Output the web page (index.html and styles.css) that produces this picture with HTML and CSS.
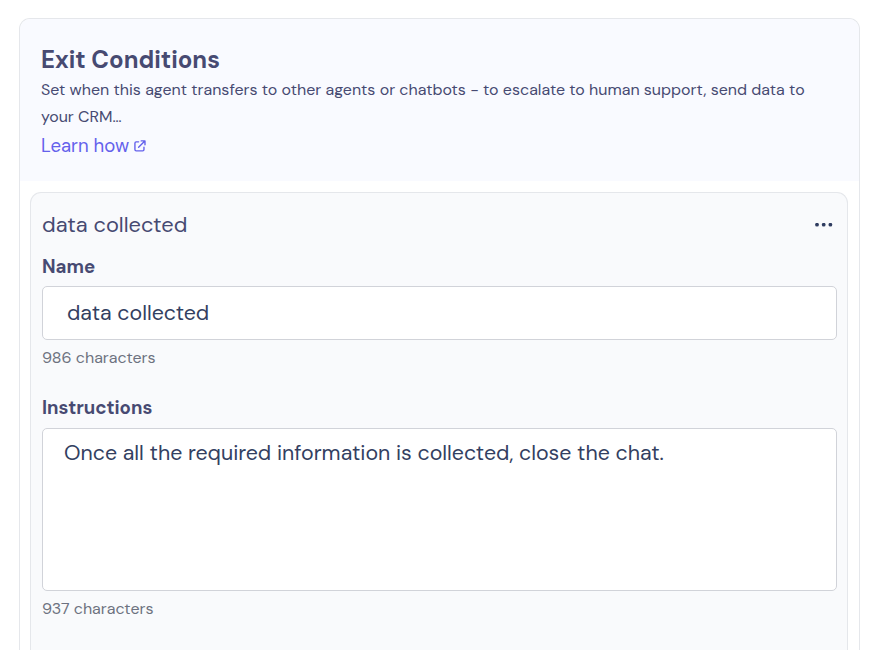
FILE: index.html
```html
<!DOCTYPE html>
<html lang="en">
<head>
<meta charset="utf-8">
<title>Exit Conditions</title>
<link rel="stylesheet" href="styles.css">
</head>
<body>
<main class="panel">
  <header class="intro">
    <h1>Exit Conditions</h1>
    <p>Set when this agent transfers to other agents or chatbots - to escalate to human support, send data to your CRM…</p>
    <a class="learn" href="#">Learn how
      <svg width="12" height="12" viewBox="0 0 13 13" fill="none" stroke="currentColor" stroke-width="1.5" stroke-linecap="round" stroke-linejoin="round"><path d="M5 2H2.4Q1 2 1 3.4V10.4Q1 11.8 2.4 11.8H9.4Q10.8 11.8 10.8 10.4V7.8M7.8 1H11.9V5.1M11.7 1.2L5 7.9"/></svg>
    </a>
  </header>
  <section class="card">
    <div class="card-head">
      <h2>data collected</h2>
      <button class="more" aria-label="More"><svg width="18" height="4" viewBox="0 0 18 4" fill="currentColor"><circle cx="2" cy="1.7" r="1.9"/><circle cx="8.7" cy="1.7" r="1.9"/><circle cx="15.4" cy="1.7" r="1.9"/></svg></button>
    </div>
    <label class="label" for="name">Name</label>
    <div class="field" id="name">data collected</div>
    <div class="count">986 characters</div>
    <label class="label second" for="instructions">Instructions</label>
    <div class="field area" id="instructions">Once all the required information is collected, close the chat.</div>
    <div class="count">937 characters</div>
  </section>
</main>
</body>
</html>
```
FILE: styles.css
```css
* { box-sizing: border-box; }
html, body { height: 100%; }
body {
  margin: 0;
  padding: 18px 20px 0 19px;
  background: #fff;
  color: #474a72;
  font-family: "DM Sans", Inter, sans-serif;
}
.panel {
  display: flex;
  flex-direction: column;
  height: 100%;
  border: 1px solid #e5e7eb;
  border-bottom: 0;
  border-radius: 11px 11px 0 0;
  overflow: hidden;
}
.intro {
  flex: none;
  height: 162px;
  padding: 25px 21px 0;
  background: #f9faff;
}
h1 { margin: 0; font-size: 24px; line-height: 32px; font-weight: 700; }
p { margin: 0; font-size: 16px; line-height: 27px; }
.learn {
  display: flex;
  align-items: center;
  gap: 5px;
  margin-top: 2px;
  color: #6461ec;
  font-size: 18.6px;
  line-height: 28px;
  text-decoration: none;
}
.card {
  flex: 1;
  margin: 11px 11px 0 10px;
  padding: 16px 10px 0 11px;
  background: #f9fafc;
  border: 1px solid #e5e7eb;
  border-bottom: 0;
  border-radius: 11px 11px 0 0;
}
.card-head { display: flex; justify-content: space-between; align-items: center; height: 32px; }
h2 { margin: 0; font-size: 21.8px; line-height: 32px; font-weight: 400; }
.more { display: flex; margin: 0 4px 0 0; padding: 0; border: 0; background: none; color: #2f3c60; }
.label { display: block; margin-top: 12px; font-size: 18.6px; line-height: 28px; font-weight: 700; }
.field {
  height: 54px;
  margin-top: 5px;
  padding: 0 24px;
  border: 1px solid #d1d3d9;
  border-radius: 5px;
  background: #fff;
  color: #334061;
  font-size: 21.33px;
  line-height: 52px;
}
.count { margin-top: 5px; color: #6d7280; font-size: 16px; line-height: 26px; }
.label.second { margin-top: 23px; }
.area { height: 163px; margin-top: 6px; padding: 8px 21px; line-height: 32px; }
```
